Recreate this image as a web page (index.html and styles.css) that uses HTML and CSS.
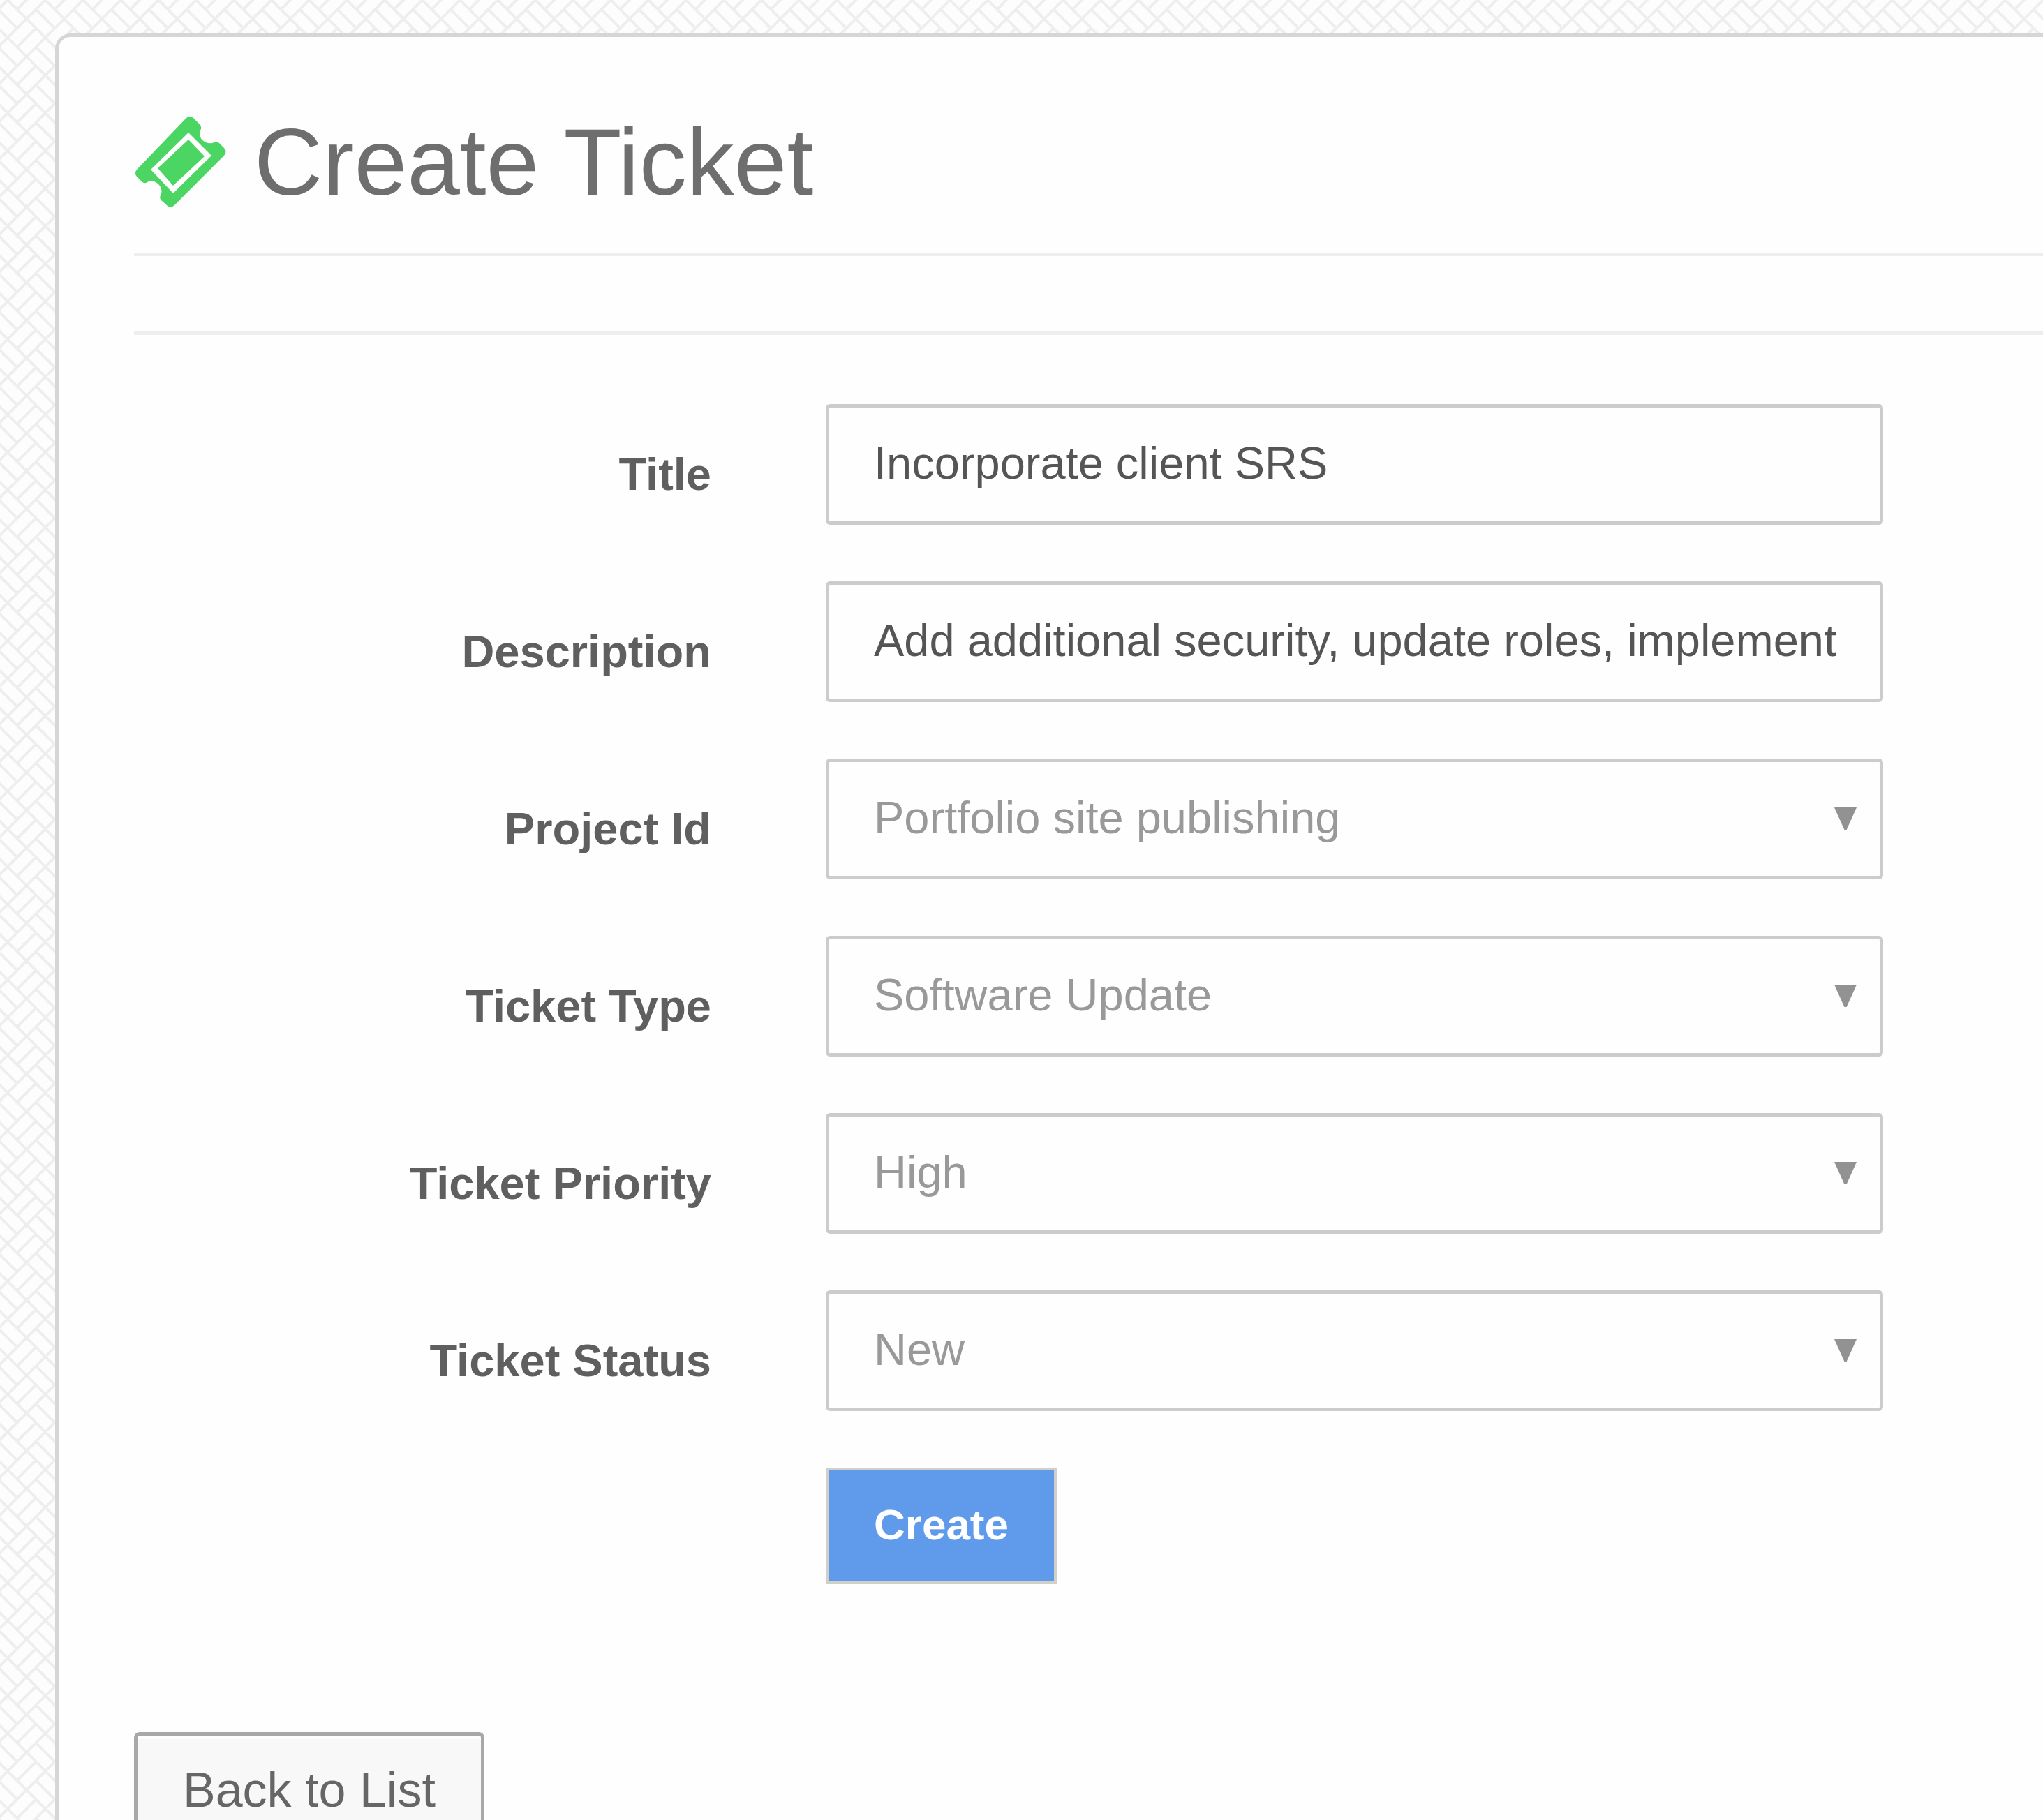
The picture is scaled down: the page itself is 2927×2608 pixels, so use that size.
FILE: index.html
```html
<!DOCTYPE html>
<html lang="en">
<head>
<meta charset="utf-8">
<title>Create Ticket</title>
<link rel="stylesheet" href="styles.css">
</head>
<body>
<main class="panel">
  <h1 class="heading">
    <svg class="heading-icon" viewBox="0 0 132 132" aria-hidden="true">
      <path fill="#4bd562" fill-rule="evenodd" d="M75 3Q80 -1 85 3L94 12Q98 16 95 21C90 32 104 43 115 38Q119 36 122 39L129 46Q134 52 129 57L58 128Q53 133 48 129L39 121Q36 118 38 114C44 103 31 89 19 95Q15 98 11 94L4 87Q0 82 4 77ZM78 24L24 77L56 111L111 57ZM78 34L101 58L56 100L34 75Z"/>
    </svg>
    <span>Create Ticket</span>
  </h1>
  <hr class="rule">
  <hr class="rule rule-second">

  <form class="form">
    <label class="label" for="title">Title</label>
    <input class="control" id="title" type="text" value="Incorporate client SRS">

    <label class="label" for="description">Description</label>
    <input class="control" id="description" type="text" value="Add additional security, update roles, implement">

    <label class="label" for="project">Project Id</label>
    <div class="select">
      <select class="control" id="project"><option>Portfolio site publishing</option></select>
    </div>

    <label class="label" for="type">Ticket Type</label>
    <div class="select">
      <select class="control" id="type"><option>Software Update</option></select>
    </div>

    <label class="label" for="priority">Ticket Priority</label>
    <div class="select">
      <select class="control" id="priority"><option>High</option></select>
    </div>

    <label class="label" for="status">Ticket Status</label>
    <div class="select">
      <select class="control" id="status"><option>New</option></select>
    </div>

    <button class="create" type="submit">Create</button>
  </form>

  <a class="back" href="#">Back to List</a>
</main>
</body>
</html>
```
FILE: styles.css
```css
* {
  box-sizing: border-box;
}

body {
  height: 100vh;
  margin: 0;
  padding: 48px 0 0 79px;
  overflow: hidden;
  background: #fdfdfd url("data:image/svg+xml,%3Csvg xmlns='http://www.w3.org/2000/svg' width='54' height='54'%3E%3Cpath d='M9 -2L56 45M-2 41L13 56M13 -2L-2 13M56 9L9 56M51 -13L24 14M51 41L24 68M-3 13L25 41M51 13L79 41' fill='none' stroke='%23eee' stroke-width='4'/%3E%3C/svg%3E");
  color: #5f5f5f;
  font-family: "Liberation Sans", Arial, sans-serif;
  font-size: 65px;
}

.panel {
  min-height: 100%;
  padding: 104px 0 104px 108px;
  border: 5px solid #d6d6d6;
  border-right: 0;
  border-radius: 22px 0 0 0;
  background: #fefefe;
}

.heading {
  display: flex;
  align-items: center;
  gap: 40px;
  margin: 0;
  color: #6e6e6e;
  font-size: 136px;
  font-weight: 400;
  line-height: 150px;
}

.heading-icon {
  width: 132px;
  height: 132px;
}

.rule {
  height: 5px;
  margin: 55px 0 0;
  border: 0;
  background: #eee;
}

.rule-second {
  margin-top: 108px;
}

.form {
  display: grid;
  grid-template-columns: minmax(0, 827px) minmax(0, 1515px);
  gap: 81px 164px;
  margin-top: 99px;
}

.label {
  align-self: center;
  padding-top: 28px;
  font-weight: 700;
  text-align: right;
}

.control {
  display: block;
  width: 100%;
  height: 173px;
  margin: 0;
  padding: 0 60px 4px 64px;
  border: 5px solid #ccc;
  border-radius: 6px;
  appearance: none;
  background: #fefefe;
  color: #555;
  font: inherit;
}

.select {
  position: relative;
}

.select .control {
  color: #999;
}

.select::after {
  position: absolute;
  top: 70px;
  right: 38px;
  width: 32px;
  height: 32px;
  background: #929292;
  clip-path: polygon(0 0, 100% 0, 55% 100%, 45% 100%);
  content: "";
  pointer-events: none;
}

.create {
  grid-column: 2;
  justify-self: start;
  height: 167px;
  padding: 0 65px 4px;
  border: 4px solid #d2cec8;
  background: #5f9bea;
  color: #fff;
  font: inherit;
  font-size: 62px;
  font-weight: 700;
}

.back {
  display: inline-block;
  margin-top: 212px;
  padding: 0 65px;
  border: 5px solid #a8a8a8;
  border-radius: 8px;
  background: #f8f8f8;
  box-shadow: inset 0 5px #fefefe;
  color: #666;
  font-size: 70px;
  line-height: 157px;
  text-decoration: none;
}
```
